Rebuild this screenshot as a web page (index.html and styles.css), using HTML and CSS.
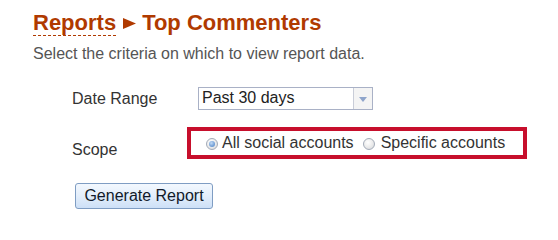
FILE: index.html
```html
<!DOCTYPE html>
<html lang="en">
<head>
<meta charset="utf-8">
<title>Reports - Top Commenters</title>
<link rel="stylesheet" href="styles.css">
</head>
<body>
<div class="page">
  <h1 class="title"><span class="crumb">Reports</span><svg class="sep" width="13" height="11" viewBox="0 0 13 11"><polygon points="0,0 13,5.5 0,11" fill="#b03a00"/></svg>Top Commenters</h1>
  <p class="intro">Select the criteria on which to view report data.</p>
  <div class="form">
    <div class="label label-mid">Date Range</div>
    <div class="select">
      <span class="select-value">Past 30 days</span>
      <span class="select-btn"><svg width="8" height="5" viewBox="0 0 8 5"><polygon points="0,0 8,0 4,5" fill="#8fa5cb"/></svg></span>
    </div>
    <div class="label label-end">Scope</div>
    <div class="scope">
      <label class="opt"><span class="radio checked"></span><span class="opt-text">All social accounts</span></label>
      <label class="opt opt-2"><span class="radio"></span><span class="opt-text">Specific accounts</span></label>
    </div>
    <div class="actions">
      <button class="btn" type="button">Generate Report</button>
    </div>
  </div>
</div>
</body>
</html>
```

FILE: styles.css
```css
html, body {
  margin: 0;
  padding: 0;
  background: #ffffff;
}
body {
  font-family: "Liberation Sans", Arial, sans-serif;
  color: #333333;
}
.page {
  padding: 10px 0 0 33px;
}
.title {
  margin: 0;
  font-size: 22px;
  line-height: 25px;
  font-weight: bold;
  color: #b03a00;
  display: flex;
  align-items: baseline;
}
.crumb {
  border-bottom: 1px dashed #b03a00;
  line-height: 24px;
}
.sep {
  margin: 0 6px 0 7px;
  align-self: center;
}
.intro {
  margin: 9px 0 0 0;
  font-size: 16px;
  line-height: 18px;
  color: #555555;
}
.form {
  margin: 24px 0 0 39px;
  display: grid;
  grid-template-columns: 126px auto;
  grid-template-rows: 23px 32px auto;
  row-gap: 17px;
  justify-content: start;
}
.label {
  font-size: 16px;
  line-height: 18px;
  color: #333333;
}
.label-mid {
  align-self: center;
  padding-top: 1px;
}
.label-end {
  align-self: end;
}
.select {
  width: 175px;
  height: 23px;
  box-sizing: border-box;
  border: 1px solid #a9b1c6;
  display: flex;
  background: #ffffff;
}
.select-value {
  flex: 1;
  font-size: 16px;
  line-height: 18px;
  padding: 1px 0 0 3px;
  color: #222222;
}
.select-btn {
  width: 18px;
  border-left: 1px solid #c9cdd8;
  background: #f4f4f4;
  display: flex;
  align-items: center;
  justify-content: center;
  padding-top: 1px;
}
.scope {
  margin-left: -11px;
  width: 340px;
  height: 32px;
  box-sizing: border-box;
  border: 4px solid #c70f2c;
  display: flex;
  align-items: center;
  padding: 0 0 0 15px;
}
.opt {
  display: flex;
  align-items: center;
  font-size: 16px;
  line-height: 18px;
  color: #333333;
}
.opt-2 {
  margin-left: 9px;
}
.opt-2 .opt-text {
  margin-left: 6px;
}
.opt-text {
  margin-left: 4px;
}
.radio {
  width: 12px;
  height: 12px;
  box-sizing: border-box;
  border-radius: 50%;
  border: 1px solid #a3abb8;
  background: radial-gradient(circle at 40% 35%, #ffffff 0%, #eeeeee 45%, #d4d6da 100%);
  display: flex;
  align-items: center;
  justify-content: center;
  margin-top: 1px;
}
.radio.checked::after {
  content: "";
  width: 6px;
  height: 6px;
  border-radius: 50%;
  background: radial-gradient(circle at 40% 35%, #c3dbf5 0%, #7fa9dc 50%, #4d7fc0 100%);
}
.actions {
  grid-column: 1 / 3;
  padding: 7px 0 0 3px;
}
.btn {
  display: block;
  height: 26px;
  width: 138px;
  padding: 0;
  box-sizing: border-box;
  border: 1px solid #7f9dc3;
  border-radius: 3px;
  background: linear-gradient(to bottom, #f3f8fe 0%, #e3eefb 50%, #cde0f7 100%);
  font-family: "Liberation Sans", Arial, sans-serif;
  font-size: 16px;
  line-height: 18px;
  color: #111a2a;
}
```
